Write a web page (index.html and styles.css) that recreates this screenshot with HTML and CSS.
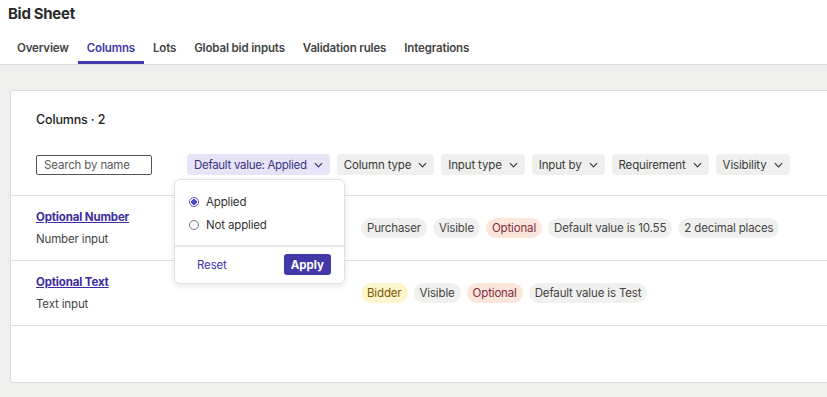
FILE: index.html
```html
<!DOCTYPE html>
<html lang="en">
<head>
    <meta charset="UTF-8">
    <meta name="viewport" content="width=device-width, initial-scale=1.0">
    <title>Bid Sheet</title>
    <link rel="stylesheet" href="styles.css">
</head>
<body>
    <header>
        <h1>Bid Sheet</h1>
        <nav class="tabs">
            <a class="tab">Overview</a>
            <a class="tab active">Columns</a>
            <a class="tab">Lots</a>
            <a class="tab">Global bid inputs</a>
            <a class="tab">Validation rules</a>
            <a class="tab">Integrations</a>
        </nav>
    </header>
    <main>
        <div class="card">
            <div class="card-head">
                <h2>Columns · 2</h2>
                <div class="filters">
                    <input type="text" class="search" placeholder="Search by name">
                    <div class="filter-wrap">
                        <button class="chip chip-active">Default value: Applied
                            <svg class="chev" viewBox="0 0 10 6"><path d="M1 1l4 4 4-4"/></svg>
                        </button>
                        <div class="dropdown">
                            <div class="options">
                                <label class="option">
                                    <span class="radio checked"></span> Applied
                                </label>
                                <label class="option">
                                    <span class="radio"></span> Not applied
                                </label>
                            </div>
                            <div class="dropdown-foot">
                                <a class="reset">Reset</a>
                                <button class="apply">Apply</button>
                            </div>
                        </div>
                    </div>
                    <button class="chip">Column type
                        <svg class="chev" viewBox="0 0 10 6"><path d="M1 1l4 4 4-4"/></svg>
                    </button>
                    <button class="chip">Input type
                        <svg class="chev" viewBox="0 0 10 6"><path d="M1 1l4 4 4-4"/></svg>
                    </button>
                    <button class="chip">Input by
                        <svg class="chev" viewBox="0 0 10 6"><path d="M1 1l4 4 4-4"/></svg>
                    </button>
                    <button class="chip">Requirement
                        <svg class="chev" viewBox="0 0 10 6"><path d="M1 1l4 4 4-4"/></svg>
                    </button>
                    <button class="chip">Visibility
                        <svg class="chev" viewBox="0 0 10 6"><path d="M1 1l4 4 4-4"/></svg>
                    </button>
                </div>
            </div>

            <div class="row">
                <div class="name-col">
                    <a class="col-name">Optional Number</a>
                    <div class="col-type">Number input</div>
                </div>
                <div class="tags">
                    <span class="tag">Purchaser</span>
                    <span class="tag">Visible</span>
                    <span class="tag tag-red">Optional</span>
                    <span class="tag">Default value is 10.55</span>
                    <span class="tag">2 decimal places</span>
                </div>
            </div>

            <div class="row">
                <div class="name-col">
                    <a class="col-name">Optional Text</a>
                    <div class="col-type">Text input</div>
                </div>
                <div class="tags">
                    <span class="tag tag-yellow">Bidder</span>
                    <span class="tag">Visible</span>
                    <span class="tag tag-red">Optional</span>
                    <span class="tag">Default value is Test</span>
                </div>
            </div>
        </div>
    </main>
</body>
</html>
```

FILE: styles.css
```css
body {
    font-family: Inter, "Noto Sans", sans-serif;
    margin: 0;
    padding: 0;
    background-color: #efefed;
    color: #2b2b2b;
    font-size: 11.5px;
    letter-spacing: -0.15px;
    overflow: hidden;
}

header {
    background: #ffffff;
    border-bottom: 1px solid #dcdcdc;
    padding: 0 0 0 8px;
}

h1 {
    margin: 0;
    padding-top: 5px;
    font-size: 15px;
    font-weight: 700;
    line-height: 18px;
    letter-spacing: -0.3px;
    color: #2a2a2a;
}

.tabs {
    display: flex;
    margin-top: 12px;
}

.tab {
    padding: 0 9px;
    height: 29px;
    line-height: 26px;
    font-weight: 600;
    color: #444444;
    box-sizing: border-box;
    border-bottom: 3px solid transparent;
    white-space: nowrap;
}

.tab.active {
    color: #3f36a8;
    border-bottom-color: #4338b0;
}

main {
    padding: 25px 0 15px 10px;
}

.card {
    background: #ffffff;
    border: 1px solid #dcdcdc;
    border-radius: 3px;
    margin-right: -10px;
    padding-bottom: 56px;
}

.card-head {
    padding: 21px 25px 20px;
}

h2 {
    margin: 0;
    font-size: 12.5px;
    font-weight: 500;
    line-height: 16px;
    color: #222222;
}

.filters {
    display: flex;
    align-items: center;
    gap: 7px;
    margin-top: 26px;
}

.search {
    width: 116px;
    height: 20px;
    flex-shrink: 0;
    box-sizing: border-box;
    border: 1px solid #555555;
    border-radius: 2px;
    padding: 0 7px;
    font-family: inherit;
    font-size: 11.5px;
    letter-spacing: -0.15px;
    margin-right: 28px;
}

.search::placeholder {
    color: #5a5a5a;
}

.filter-wrap {
    position: relative;
    flex-shrink: 0;
}

.chip {
    display: flex;
    align-items: center;
    gap: 7px;
    flex-shrink: 0;
    white-space: nowrap;
    height: 21px;
    padding: 0 7px;
    border: none;
    border-radius: 4px;
    background: #efefee;
    font-family: inherit;
    font-size: 11.5px;
    letter-spacing: -0.15px;
    color: #3a3a3a;
}

.chip-active {
    background: #e6e4f6;
    color: #3b3486;
    letter-spacing: -0.3px;
}

.chev {
    width: 9px;
    height: 6px;
    fill: none;
    stroke: #3a3a3a;
    stroke-width: 1.3;
}

.chip-active .chev {
    stroke: #3b3486;
}

.dropdown {
    position: absolute;
    left: -13px;
    top: 25px;
    width: 169px;
    background: #ffffff;
    border: 1px solid #e2e2e2;
    border-radius: 6px;
    box-shadow: 0 2px 6px rgba(0, 0, 0, 0.1);
    z-index: 2;
}

.options {
    padding: 10px 14px 9px;
    border-bottom: 2px solid #e8e8e8;
}

.option {
    display: flex;
    align-items: center;
    gap: 7px;
    height: 23px;
    color: #333333;
}

.radio {
    width: 10px;
    height: 10px;
    border: 1px solid #777777;
    border-radius: 50%;
    box-sizing: border-box;
}

.radio.checked {
    border-color: #5b52c6;
    background: radial-gradient(circle, #4f46c0 0 2.6px, #ffffff 3px);
}

.dropdown-foot {
    display: flex;
    justify-content: space-between;
    align-items: center;
    padding: 7px 13px 8px 22px;
}

.reset {
    color: #3f36a8;
}

.apply {
    background: #4338a8;
    color: #ffffff;
    border: none;
    border-radius: 3px;
    font-family: inherit;
    font-size: 11.5px;
    font-weight: 700;
    height: 21px;
    padding: 0 7px;
}

.row {
    display: flex;
    align-items: center;
    border-top: 1px solid #dcdfe6;
    padding: 13px 25px 13px;
}

.row:last-child {
    border-bottom: 1px solid #dcdcdc;
}

.name-col {
    width: 325px;
    flex-shrink: 0;
}

.col-name {
    display: block;
    font-weight: 700;
    color: #3b2ea0;
    text-decoration: underline;
    line-height: 16px;
}

.col-type {
    margin-top: 6px;
    line-height: 16px;
    color: #444444;
}

.tags {
    display: flex;
    gap: 6px;
}

.tag {
    height: 20px;
    line-height: 20px;
    padding: 0 6px;
    border-radius: 10px;
    white-space: nowrap;
    background: #f0f0ee;
    color: #444444;
}

.tag-red {
    background: #fbe6dc;
    color: #862b3a;
}

.tag-yellow {
    background: #fdf6cc;
    color: #7a5a00;
}
```
